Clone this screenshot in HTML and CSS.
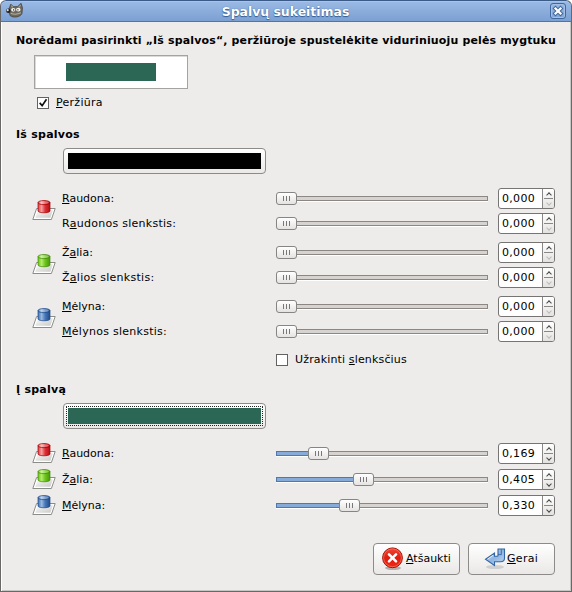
FILE: index.html
```html
<!DOCTYPE html>
<html lang="lt">
<head>
<meta charset="utf-8">
<title>Spalvų sukeitimas</title>
<link rel="stylesheet" href="styles.css">
</head>
<body>
<svg class="defs" width="0" height="0">
  <defs>
    <linearGradient id="red"><stop offset="0" stop-color="#d84048"/><stop offset=".3" stop-color="#f3a0a0"/><stop offset=".6" stop-color="#dd3035"/><stop offset="1" stop-color="#b80c14"/></linearGradient>
    <linearGradient id="green"><stop offset="0" stop-color="#6cc31c"/><stop offset=".3" stop-color="#b4ec70"/><stop offset=".6" stop-color="#6cc51a"/><stop offset="1" stop-color="#4a970a"/></linearGradient>
    <linearGradient id="blue"><stop offset="0" stop-color="#4272b4"/><stop offset=".3" stop-color="#9bb9de"/><stop offset=".6" stop-color="#4676b8"/><stop offset="1" stop-color="#204a87"/></linearGradient>
    <linearGradient id="sheet" x1="0" y1="0" x2="1" y2="1"><stop offset="0" stop-color="#fff"/><stop offset=".5" stop-color="#e2e2e0"/><stop offset="1" stop-color="#c8c8c6"/></linearGradient>
    <linearGradient id="stop" x1="0" y1="0" x2="0" y2="1"><stop offset="0" stop-color="#f04a38"/><stop offset=".5" stop-color="#e01c10"/><stop offset="1" stop-color="#f02a14"/></linearGradient>
    <linearGradient id="arrow" x1="0" y1="0" x2="1" y2="1"><stop offset="0" stop-color="#d4e4f6"/><stop offset=".5" stop-color="#8fb5e0"/><stop offset="1" stop-color="#c4daf0"/></linearGradient>
    <symbol id="channel" viewBox="0 0 24 20">
      <path d="M4.6 8.5H23.2L19.4 19.5H.8Z" fill="#fff" stroke="#8b8d89"/>
      <path d="M6 10.2H20.8L18.4 17.8H3.2Z" fill="url(#sheet)" stroke="none"/>
      <path d="M6 2.6V11.2C7.4 13.3 16.6 13.3 18 11.2V2.6Z" stroke-width=".7"/>
      <ellipse cx="12" cy="2.6" rx="6" ry="2.1" stroke-width=".7"/>
      <ellipse cx="12" cy="2.6" rx="4.8" ry="1.4" fill="#fff" fill-opacity=".35" stroke="none"/>
    </symbol>
  </defs>
</svg>
<div class="window">
  <header class="titlebar">
    <svg class="wilber" viewBox="0 0 16 14">
      <path d="M3 5 4.5 1 7 3.5 11 3.3 14.2.2 15.5 4.5 15 10C13 13.5 7 14 4 12L2.5 8Z" fill="#6e695e" stroke="#45423b" stroke-width=".7"/>
      <path d="M5 2.5 6.3 4M13.8 2 12 4" stroke="#a8a294"/>
      <ellipse cx="6.8" cy="6.4" rx="2" ry="1.7" fill="#f2f2ee"/><ellipse cx="11.6" cy="6.2" rx="2.1" ry="1.7" fill="#f2f2ee"/>
      <circle cx="7.2" cy="6.5" r=".6"/><circle cx="11.2" cy="6.4" r=".6"/>
      <circle cx="2.2" cy="7.3" r="2.1" fill="#222"/><circle cx="1.6" cy="6.7" r="1" fill="#ddd"/>
      <path d="M4.5 9.6Q9 11.6 14 9.2" stroke="#b5ae9b" fill="none"/>
    </svg>
    <h1 class="title">Spalvų sukeitimas</h1>
    <span class="close"><svg viewBox="0 0 14 14"><path d="M4.5 4.5 9.5 9.5M9.5 4.5 4.5 9.5" stroke="#41689c" stroke-width="4.2" stroke-linecap="square"/><path d="M4.5 4.5 9.5 9.5M9.5 4.5 4.5 9.5" stroke="#fff" stroke-width="2.2" stroke-linecap="square"/></svg></span>
  </header>
  <main class="content">
    <p class="heading hint">Norėdami pasirinkti „Iš spalvos“, peržiūroje spustelėkite viduriniuoju pelės mygtuku</p>
    <div class="preview"><div class="preview-color"></div></div>
    <label class="check check-preview"><span class="box"><svg viewBox="0 0 12 12"><path d="M2 5.8 5 9.2 10.2 1.4" fill="none" stroke="#111" stroke-width="2"/></svg></span><span class="label wide"><u>P</u>eržiūra</span></label>

    <h2 class="heading from-title">Iš spalvos</h2>
    <div class="color-button"><div class="swatch black"></div></div>
    <section class="groups double">
      <div class="group">
        <svg class="channel"><use href="#channel" fill="url(#red)" stroke="#a40000"/></svg>
        <div class="rows">
          <div class="row"><span class="label"><u>R</u>audona:</span><div class="slider"><i class="handle"></i></div><div class="spin min"><span>0,000</span><b><i></i><i></i></b></div></div>
          <div class="row"><span class="label wide">R<u>a</u>udonos slenkstis:</span><div class="slider"><i class="handle"></i></div><div class="spin min"><span>0,000</span><b><i></i><i></i></b></div></div>
        </div>
      </div>
      <div class="group">
        <svg class="channel"><use href="#channel" fill="url(#green)" stroke="#438a08"/></svg>
        <div class="rows">
          <div class="row"><span class="label">Ž<u>a</u>lia:</span><div class="slider"><i class="handle"></i></div><div class="spin min"><span>0,000</span><b><i></i><i></i></b></div></div>
          <div class="row"><span class="label wide">Ž<u>a</u>lios slenkstis:</span><div class="slider"><i class="handle"></i></div><div class="spin min"><span>0,000</span><b><i></i><i></i></b></div></div>
        </div>
      </div>
      <div class="group">
        <svg class="channel"><use href="#channel" fill="url(#blue)" stroke="#204a87"/></svg>
        <div class="rows">
          <div class="row"><span class="label"><u>M</u>ėlyna:</span><div class="slider"><i class="handle"></i></div><div class="spin min"><span>0,000</span><b><i></i><i></i></b></div></div>
          <div class="row"><span class="label wide"><u>M</u>ėlynos slenkstis:</span><div class="slider"><i class="handle"></i></div><div class="spin min"><span>0,000</span><b><i></i><i></i></b></div></div>
        </div>
      </div>
    </section>
    <label class="check check-lock"><span class="box"></span><span class="label lock-label">Užrakinti <u>s</u>lenksčius</span></label>

    <h2 class="heading to-title">Į spalvą</h2>
    <div class="color-button focused"><div class="swatch teal"></div></div>
    <section class="groups single">
      <div class="group">
        <svg class="channel"><use href="#channel" fill="url(#red)" stroke="#a40000"/></svg>
        <div class="rows"><div class="row"><span class="label"><u>R</u>audona:</span><div class="slider"><i class="fill" style="width:32px"></i><i class="handle"></i></div><div class="spin"><span>0,169</span><b><i></i><i></i></b></div></div></div>
      </div>
      <div class="group">
        <svg class="channel"><use href="#channel" fill="url(#green)" stroke="#438a08"/></svg>
        <div class="rows"><div class="row"><span class="label">Ž<u>a</u>lia:</span><div class="slider"><i class="fill" style="width:77px"></i><i class="handle"></i></div><div class="spin"><span>0,405</span><b><i></i><i></i></b></div></div></div>
      </div>
      <div class="group">
        <svg class="channel"><use href="#channel" fill="url(#blue)" stroke="#204a87"/></svg>
        <div class="rows"><div class="row"><span class="label"><u>M</u>ėlyna:</span><div class="slider"><i class="fill" style="width:63px"></i><i class="handle"></i></div><div class="spin"><span>0,330</span><b><i></i><i></i></b></div></div></div>
      </div>
    </section>
    <footer class="actions">
      <div class="button cancel"><svg viewBox="0 0 22 24"><ellipse cx="11" cy="21" rx="8" ry="2" fill="#777" opacity=".5"/><circle cx="10.5" cy="10.8" r="9.9" fill="url(#stop)" stroke="#a81005"/><circle cx="10.5" cy="10.8" r="8.9" fill="none" stroke="#f47c6c" stroke-width=".7"/><path d="M7 7.3 14 14.3M14 7.3 7 14.3" stroke="#fff" stroke-width="2.6" stroke-linecap="round"/></svg><span class="label"><u>A</u>tšaukti</span></div>
      <div class="button ok"><svg viewBox="0 0 22 24"><ellipse cx="11" cy="20" rx="9" ry="2" fill="#777" opacity=".25"/><path d="M14 2H20.5V11Q20.5 14.8 16.5 14.8H10.5V18.5L1.5 12.3 10.5 6V9.3H13Q14 9.3 14 8.2Z" fill="url(#arrow)" stroke="#3465a4" stroke-width="1.1"/><path d="M3.6 12.1 9.4 8.1" stroke="#fff" stroke-opacity=".7" fill="none"/><path d="M14 7.6H17.3V2.3" stroke="#3465a4" fill="none" stroke-width=".9"/></svg><span class="label ok-label"><u>G</u>erai</span></div>
    </footer>
  </main>
</div>
</body>
</html>
```
FILE: styles.css
```css
* { box-sizing: border-box; }
body { margin: 0; background: #fff; font: 11px/13px "DejaVu Sans", sans-serif; color: #000; }
h1, h2, p { margin: 0; }
.defs { display: block; height: 0; }
.window { width: 572px; height: 592px; overflow: hidden; background: #edeceb; border: 1px solid #6a6867; border-top: 0; border-radius: 6px 6px 0 0; box-shadow: inset 1px 0 #fff, inset -1px -1px #c8c6c4; }
.titlebar { display: flex; align-items: center; height: 22px; margin: 0 -1px; padding: 0 6px; background: linear-gradient(#9bbae5, #7ba0d2); border: 1px solid #3a5a88; border-bottom-color: #4a75ad; border-radius: 6px 6px 0 0; box-shadow: inset 0 1px #a9c4ea; }
.wilber { width: 17px; height: 15px; flex: none; margin-left: -1px; margin-top: -1px; }
.title { flex: 1; text-align: center; color: #fff; font-size: 12.5px; line-height: 16px; font-weight: bold; letter-spacing: -.04px; padding-top: 1px; padding-right: 2px; text-shadow: 0 1px 1px #345c92, 0 0 1px #345c92; }
.close { width: 16px; height: 16px; flex: none; border: 1px solid #41689c; border-radius: 3px; box-shadow: inset 0 0 0 1px #a4bfe5; margin-right: -1px; }
.close svg { display: block; width: 14px; height: 14px; }
.content { padding: 0 16px 0 15px; }
.heading { font-size: 11px; font-weight: bold; line-height: 13px; white-space: nowrap; letter-spacing: .25px; }
.hint { padding-top: 12px; letter-spacing: .145px; }
.preview { width: 154px; height: 34px; margin: 8px 0 0 18px; padding: 7px 31px; background: #fff; border: 1px solid #a5a3a1; box-shadow: inset 1px 1px #dcdad8; }
.preview-color { width: 90px; height: 18px; background: #2b6754; }
.check { display: flex; align-items: center; height: 13px; }
.box { width: 12px; height: 12px; flex: none; background: #fff; border: 1px solid #646260; }
.box svg { display: block; width: 10px; height: 10px; }
.check-preview { margin: 7px 0 0 21px; gap: 7px; }
.check-lock { margin: 11px 0 0 260px; gap: 7px; }
.label { white-space: nowrap; }
.wide { letter-spacing: .27px; }
.lock-label { letter-spacing: .15px; }
u { text-decoration: underline; text-underline-offset: 1px; text-decoration-thickness: 1px; text-decoration-skip-ink: none; }
.from-title { margin-top: 19px; }
.color-button { width: 203px; height: 26px; margin: 7px 0 0 47px; padding: 4px; border: 1px solid #8d8b89; border-radius: 4px; background: linear-gradient(#fff, #eae9e7); }
.swatch { height: 16px; }
.black { background: #000; }
.teal { background: #2b6754; }
.focused { outline: 1px dotted #222; outline-offset: -4px; }
.groups { display: grid; gap: 8px; margin: 14px 0 0 16px; }
.single { gap: 5px; }
.group { display: flex; align-items: center; gap: 6px; }
.channel { width: 24px; height: 20px; flex: none; }
.double .channel { margin-bottom: 2px; }
.single .channel { margin-bottom: 1px; }
.rows { display: grid; gap: 4px; }
.row { display: grid; grid-template-columns: 214px 212px 57px; align-items: center; height: 21px; }
.row .spin { margin-left: 10px; }
.slider { display: flex; align-items: center; width: 212px; height: 5px; border: 1px solid #8a8785; background: #d6d3d0; box-shadow: 0 1px #fff; }
.fill { height: 5px; flex: none; margin-left: -1px; background: #86abd9; border: 1px solid #5078ab; border-right: 0; }
.handle { flex: none; width: 21px; height: 13px; margin-left: -1px; border: 1px solid #878583; border-radius: 3px; background: linear-gradient(90deg, transparent 6px, #777 6px 7px, transparent 7px 9px, #777 9px 10px, transparent 10px 12px, #777 12px 13px, transparent 13px) 0 3px / 19px 5px no-repeat, linear-gradient(#fff, #e5e3e1); }
.fill + .handle { margin-left: 0; }
.spin { display: flex; width: 57px; height: 21px; border: 1px solid #777573; border-radius: 3px; background: #fff; overflow: hidden; }
.spin span { width: 43px; padding: 3px 0 0 3px; line-height: 13px; letter-spacing: .3px; }
.spin b { width: 12px; height: 19px; border-left: 1px solid #8a8886; background: linear-gradient(#888, #888) 1px 9px / 9px 1px no-repeat, linear-gradient(#fff, #e4e2e0); display: flex; flex-direction: column; align-items: center; }
.spin b i { width: 4px; height: 4px; border: solid #444; border-width: 1px 0 0 1px; transform: rotate(45deg); margin-top: 4px; }
.spin b i + i { transform: rotate(225deg); margin-top: 4px; }
.min b i + i { border-color: #bbb; }
.to-title { margin-top: 17px; }
.actions { display: flex; justify-content: flex-end; gap: 8px; margin-top: 27px; }
.button { width: 87px; height: 32px; border: 1px solid #8d8b89; border-radius: 4px; background: linear-gradient(#fff, #e9e8e6); display: flex; align-items: center; padding-left: 8px; gap: 2px; }
.button .label { margin-top: -1px; }
.button svg { width: 22px; height: 24px; }
.ok { padding-left: 15px; gap: 1px; }
.ok-label { letter-spacing: .3px; }
```
